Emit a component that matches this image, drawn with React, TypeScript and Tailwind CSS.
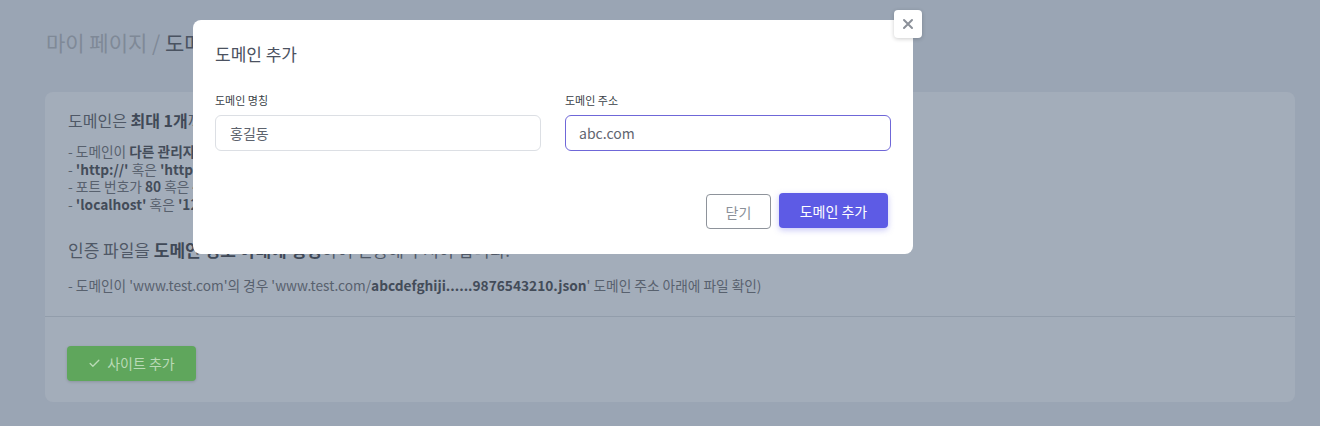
import React from "react";
import { Check } from "lucide-react";

const font = { fontFamily: '"Noto Sans CJK KR", "Noto Sans", sans-serif' };

const rules = [
  <>- 도메인이 <b className="text-[#434c59]">다른 관리자에게 이미 등록된 경우</b> 추가할 수 없습니다.</>,
  <>- <b className="text-[#434c59]">'http://'</b> 혹은 <b className="text-[#434c59]">'https://'</b> 를 제외한 주소를 입력해 주세요.</>,
  <>- 포트 번호가 <b className="text-[#434c59]">80</b> 혹은 <b className="text-[#434c59]">443</b> 이 아닌 경우 포트 번호까지 입력해 주세요.</>,
  <>- <b className="text-[#434c59]">'localhost'</b> 혹은 <b className="text-[#434c59]">'127.0.0.1'</b> 은 등록할 수 없습니다.</>,
];

const AddDomainModal = () => {
  return (
    <div className="absolute left-[193px] top-[20px] w-[720px] h-[234px] bg-white rounded-lg px-[22px] pt-[22px]">
      <h2 className="text-[17px] leading-[24px] text-[#4b5260]">도메인 추가</h2>

      <div className="mt-[26px] grid grid-cols-2 gap-x-6">
        <div>
          <label className="block text-[11px] leading-[16px] text-[#3a3f47]">도메인 명칭</label>
          <input
            defaultValue="홍길동"
            className="mt-[7px] w-full h-9 px-[14px] rounded-md border border-[#dcdfe4] text-sm text-[#5d636d] outline-none"
          />
        </div>
        <div>
          <label className="block text-[11px] leading-[16px] text-[#3a3f47]">도메인 주소</label>
          <input
            defaultValue="abc.com"
            className="mt-[7px] w-full h-9 px-[13px] rounded-md border border-[#6f67d8] text-sm text-[#5f6570] outline-none"
          />
        </div>
      </div>

      <div className="mt-[42px] flex justify-end gap-2 pr-[3px]">
        <button className="w-[65px] h-[35px] mt-px rounded border border-[#8e939b] text-sm text-[#8a9099]">닫기</button>
        <button className="w-[109px] h-[35px] rounded bg-[#5d5be5] text-sm text-white shadow-[0_2px_6px_rgba(93,91,229,0.35)]">
          도메인 추가
        </button>
      </div>

      {/* close */}
      <button className="absolute -top-[10px] -right-[9px] w-7 h-7 rounded bg-white shadow-[0_1px_4px_rgba(0,0,0,0.2)] flex items-center justify-center">
        <svg width="12" height="12" viewBox="0 0 12 12" fill="none" stroke="#8b9099" strokeWidth="2" strokeLinecap="round">
          <path d="M2 2l8 8M10 2l-8 8" />
        </svg>
      </button>
    </div>
  );
};

const App = () => {
  return (
    <div style={font} className="relative w-full h-[426px] overflow-hidden bg-[#9aa5b4]">
      <div className="pl-[45px] pr-[25px] pt-[29px]">
        <h1 className="text-[21px] leading-[27px] text-[#7f8997] ml-px">
          마이 페이지 / <span className="text-[#4a5361]">도메인 관리</span>
        </h1>

        <div className="mt-[36px] rounded-lg bg-[#a3adba]">
          <div className="px-[23px] pt-[16px] pb-[22px]">
            <h3 className="text-[16px] leading-[24px] text-[#4f5866]">
              도메인은 <b className="text-[#404957]">최대 1개</b>까지 추가할 수 있습니다.
            </h3>
            <ul className="mt-[11px] text-[13.7px] leading-[17.7px] text-[#58616e]">
              {rules.map((r, i) => (
                <li key={i}>{r}</li>
              ))}
            </ul>
            <h3 className="mt-[23px] text-[17px] leading-[26px] text-[#4f5866]">
              인증 파일을 <b className="text-[#404957]">도메인 경로 아래에 생성</b>하여 인증해 주셔야 합니다.
            </h3>
            <p className="mt-[13px] text-[13.7px] leading-[18px] text-[#58616e]">
              - 도메인이 'www.test.com'의 경우 'www.test.com/
              <b className="text-[#434c59]">abcdefghiji......9876543210.json</b>' 도메인 주소 아래에 파일 확인)
            </p>
          </div>
          <div className="border-t border-[#929dab] px-[22px] pt-[29px] pb-[21px]">
            <button className="h-[35px] w-[129px] justify-center rounded bg-[#5fa65c] text-sm text-[#b9dab6] shadow-[0_1px_3px_rgba(0,0,0,0.15)] flex items-center gap-1.5">
              <Check size={13} strokeWidth={2.5} />
              사이트 추가
            </button>
          </div>
        </div>
      </div>

      <AddDomainModal />
    </div>
  );
};

export default App;
